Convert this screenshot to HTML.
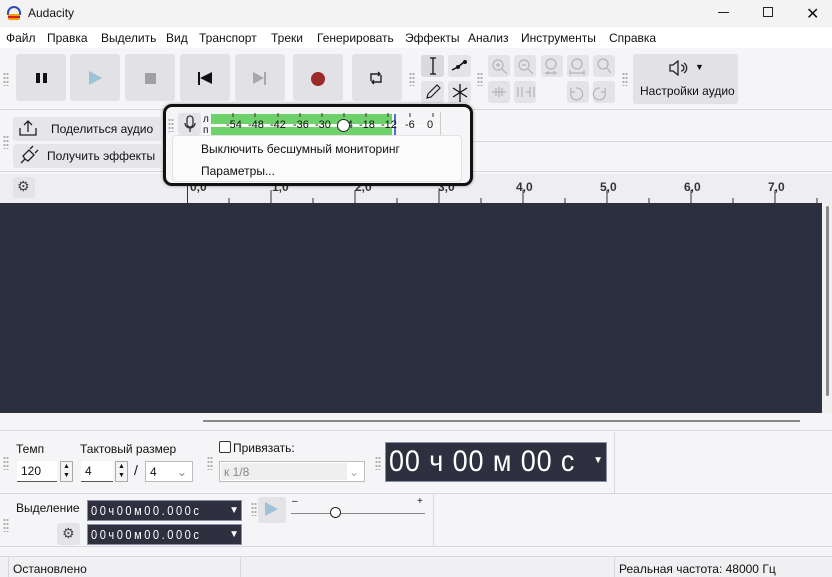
<!DOCTYPE html><html><head><meta charset="utf-8"><style>
*{box-sizing:border-box;margin:0;padding:0}
body{width:832px;height:577px;overflow:hidden;background:#f5f5f7;font-family:"Liberation Sans","DejaVu Sans",sans-serif;font-size:12px;color:#111;position:relative}
.a{position:absolute}
.btn{position:absolute;background:#e1e1e6;border-radius:3px}
.sb{position:absolute;background:#e4e4e8;border-radius:3px}
.grip{position:absolute;width:6px;height:14px;background-image:radial-gradient(circle,#aaa 1px,transparent 1.2px);background-size:3px 4px}
.tc{position:absolute;background:#2e3040;color:#fff;font-family:"Liberation Sans",sans-serif;border:1px solid #8a8fa8;white-space:pre;overflow:hidden}
.ln{position:absolute;background:#d8d8dc}
.m span{position:absolute;top:0}
.db span{position:absolute;top:0}
</style></head><body>
<div class="a" style="left:0;top:0;width:832px;height:27px;background:#f3f3f3"></div>
<svg class="a" style="left:6px;top:5px" width="16" height="16" viewBox="0 0 16 16"><path d="M2 10 V8 A6 6 0 0 1 14 8 V10" fill="none" stroke="#2a4db8" stroke-width="2"/><rect x="2" y="9" width="12" height="6" rx="2" fill="#f4a000"/><rect x="2" y="11" width="12" height="2" fill="#d62020"/></svg>
<div class="a" style="left:28px;top:6px;font-size:12px">Audacity</div>
<div class="a" style="left:718px;top:12px;width:11px;height:1px;background:#222"></div>
<div class="a" style="left:763px;top:7px;width:10px;height:10px;border:1px solid #222"></div>
<div class="a" style="left:806px;top:4px;font-size:16px">✕</div>
<div class="a" style="left:0;top:27px;width:832px;height:21px;background:#fff"></div>
<div class="a m" style="left:0;top:31px;width:832px;height:16px;font-size:12px">
<span style="left:6px">Файл</span><span style="left:47px">Правка</span><span style="left:101px">Выделить</span><span style="left:166px">Вид</span><span style="left:199px">Транспорт</span><span style="left:271px">Треки</span><span style="left:317px">Генерировать</span><span style="left:405px">Эффекты</span><span style="left:468px">Анализ</span><span style="left:521px">Инструменты</span><span style="left:609px">Справка</span>
</div>
<div class="grip" style="left:3px;top:72px"></div>
<div class="btn" style="left:16px;top:54px;width:50px;height:47px"></div>
<div class="a" style="left:36px;top:73px;width:4px;height:10px;background:#111"></div><div class="a" style="left:43px;top:73px;width:4px;height:10px;background:#111"></div>
<div class="btn" style="left:70px;top:54px;width:50px;height:47px"></div>
<div class="a" style="left:89px;top:71px;width:0;height:0;border-left:13px solid #9cc3d6;border-top:7px solid transparent;border-bottom:7px solid transparent"></div>
<div class="btn" style="left:125px;top:54px;width:50px;height:47px"></div>
<div class="a" style="left:145px;top:73px;width:11px;height:11px;background:#a0a0a4"></div>
<div class="btn" style="left:180px;top:54px;width:50px;height:47px"></div>
<div class="a" style="left:198px;top:72px;width:2px;height:13px;background:#111"></div><div class="a" style="left:200px;top:72px;border-right:12px solid #111;border-top:6.5px solid transparent;border-bottom:6.5px solid transparent"></div>
<div class="btn" style="left:235px;top:54px;width:50px;height:47px"></div>
<div class="a" style="left:253px;top:72px;border-left:11px solid #a8a8ac;border-top:6.5px solid transparent;border-bottom:6.5px solid transparent"></div><div class="a" style="left:264px;top:72px;width:2px;height:13px;background:#a8a8ac"></div>
<div class="btn" style="left:293px;top:54px;width:50px;height:47px"></div>
<div class="a" style="left:311px;top:72px;width:14px;height:14px;border-radius:50%;background:#9c2a2a"></div>
<div class="btn" style="left:352px;top:54px;width:50px;height:47px"></div>
<svg class="a" style="left:368px;top:70px" width="16" height="16" viewBox="0 0 16 16" fill="none" stroke="#222" stroke-width="1.4"><path d="M3 11V4h9M10 2l2 2-2 2M13 5v7H4M6 14l-2-2 2-2"/></svg>
<div class="grip" style="left:409px;top:72px"></div>
<div class="btn" style="left:421px;top:55px;width:23px;height:22px;background:#d9d9de"></div>
<svg class="a" style="left:425px;top:57px" width="16" height="18" fill="none" stroke="#111" stroke-width="1.3"><path d="M5 1h6M8 1v16M5 17h6"/></svg>
<div class="sb" style="left:448px;top:55px;width:23px;height:22px"></div>
<svg class="a" style="left:450px;top:58px" width="20" height="16"><path d="M2 12l6-3 6-5" stroke="#111" stroke-width="1.5" fill="none"/><circle cx="8" cy="9" r="2" fill="#111"/><circle cx="15" cy="4" r="2" fill="#111"/></svg>
<div class="sb" style="left:421px;top:81px;width:23px;height:22px"></div>
<svg class="a" style="left:424px;top:83px" width="18" height="18"><path d="M3 15l1-4 9-9 3 3-9 9z" stroke="#222" fill="none" stroke-width="1.2"/></svg>
<div class="sb" style="left:448px;top:81px;width:23px;height:22px"></div>
<svg class="a" style="left:451px;top:83px" width="18" height="20" fill="none" stroke="#111" stroke-width="1.3"><path d="M9 1v18M2 5l14 9M16 5L2 14"/></svg>
<div class="grip" style="left:477px;top:72px"></div>
<div class="sb" style="left:488px;top:55px;width:22px;height:22px"></div>
<div class="sb" style="left:514px;top:55px;width:22px;height:22px"></div>
<div class="sb" style="left:541px;top:55px;width:22px;height:22px"></div>
<div class="sb" style="left:567px;top:55px;width:22px;height:22px"></div>
<div class="sb" style="left:593px;top:55px;width:22px;height:22px"></div>
<div class="sb" style="left:488px;top:81px;width:22px;height:22px"></div>
<div class="sb" style="left:514px;top:81px;width:22px;height:22px"></div>
<div class="sb" style="left:567px;top:81px;width:22px;height:22px"></div>
<div class="sb" style="left:593px;top:81px;width:22px;height:22px"></div>
<svg class="a" style="left:488px;top:55px" width="130" height="50" fill="none" stroke="#b4b4b8" stroke-width="1.2">
<circle cx="10" cy="10" r="5"/><path d="M14 14l5 5M8 10h4M10 8v4"/>
<circle cx="36" cy="10" r="5"/><path d="M40 14l5 5M34 10h4"/>
<circle cx="63" cy="9" r="5"/><path d="M57 18h12M60 16v4M66 16v4"/>
<circle cx="89" cy="9" r="5"/><path d="M82 18h14M82 15v5M96 15v5"/>
<circle cx="115" cy="9" r="5"/><path d="M119 13l4 5"/>
<path d="M4 37h14M8 33v8M11 32v10M14 33v8"/>
<path d="M30 32v10M34 32v10M38 37h4M42 32v10M46 32v10"/>
<path d="M88 33a6 6 0 1 1-5 4M83 33v4h4"/>
<path d="M112 33a6 6 0 1 0 5 4M117 33v4h-4"/>
</svg>
<div class="grip" style="left:622px;top:72px"></div>
<div class="btn" style="left:633px;top:54px;width:105px;height:50px"></div>
<svg class="a" style="left:668px;top:60px" width="22" height="16" fill="none" stroke="#222" stroke-width="1.3"><path d="M2 5h3l5-4v14l-5-4H2z"/><path d="M13 5a3 3 0 0 1 0 6M16 3a6 6 0 0 1 0 10"/></svg>
<div class="a" style="left:695px;top:62px;font-size:9px">▼</div>
<div class="a" style="left:640px;top:84px;font-size:12px">Настройки аудио</div>
<div class="ln" style="left:0;top:109px;width:832px;height:1px"></div>
<div class="grip" style="left:3px;top:135px"></div>
<div class="btn" style="left:13px;top:117px;width:148px;height:24px;background:#e6e6ea"></div>
<svg class="a" style="left:18px;top:119px" width="20" height="18" fill="none" stroke="#222" stroke-width="1.3"><path d="M2 9v7h16V9M10 13V2M6 6l4-4 4 4"/></svg>
<div class="a" style="left:51px;top:122px">Поделиться аудио</div>
<div class="btn" style="left:13px;top:144px;width:148px;height:24px;background:#e6e6ea"></div>
<svg class="a" style="left:18px;top:145px" width="22" height="20" fill="none" stroke="#222" stroke-width="1.3"><path d="M3 18l4-4M7 14l-2-3 6-6 5 5-6 6zM12 4l3-3M17 8l3-3"/></svg>
<div class="a" style="left:47px;top:149px">Получить эффекты</div>
<div class="ln" style="left:0;top:171px;width:832px;height:1px"></div>
<div class="ln" style="left:472px;top:141px;width:360px;height:1px"></div>
<div class="a" style="left:0;top:174px;width:832px;height:29px;background:#eeeef2"></div>
<div class="sb" style="left:13px;top:177px;width:22px;height:21px"></div>
<div class="a" style="left:17px;top:178px;font-size:14px;color:#444">⚙</div>
<div class="a" style="left:187px;top:174px;width:1px;height:29px;background:#333"></div>
<div class="a" style="left:186px;top:178px;width:636px;height:24px;font-weight:bold;font-size:12px;color:#333">
<span class="a" style="left:4px;top:2px">0,0</span><span class="a" style="left:86px;top:2px">1,0</span><span class="a" style="left:169px;top:2px">2,0</span><span class="a" style="left:252px;top:2px">3,0</span><span class="a" style="left:330px;top:2px">4,0</span><span class="a" style="left:414px;top:2px">5,0</span><span class="a" style="left:498px;top:2px">6,0</span><span class="a" style="left:582px;top:2px">7,0</span>
</div>
<svg class="a" style="left:187px;top:190px" width="640" height="13"><g stroke="#333"><path d="M42 8v5M84 0v13M126 8v5M168 0v13M210 8v5M252 0v13M294 8v5M336 0v13M378 8v5M420 0v13M462 8v5M504 0v13M546 8v5M588 0v13M630 8v5"/></g></svg>
<div class="a" style="left:0;top:203px;width:822px;height:210px;background:#2c2f3d"></div>
<div class="a" style="left:822px;top:203px;width:10px;height:210px;background:#f0f0f0"></div>
<div class="a" style="left:826px;top:206px;width:3px;height:190px;background:#888;border-radius:2px"></div>
<div class="a" style="left:203px;top:420px;width:597px;height:2px;background:#888"></div>
<div class="ln" style="left:0;top:430px;width:832px;height:1px"></div>
<div class="grip" style="left:3px;top:456px"></div>
<div class="a" style="left:16px;top:442px">Темп</div>
<div class="a" style="left:17px;top:461px;width:40px;height:21px;background:#fff;border-bottom:1px solid #555;padding:3px 4px">120</div>
<div class="a" style="left:60px;top:461px;width:13px;height:21px;border:1px solid #aaa;background:#f4f4f4;font-size:7px;line-height:9px;text-align:center">▲<br>▼</div>
<div class="a" style="left:80px;top:442px">Тактовый размер</div>
<div class="a" style="left:81px;top:461px;width:32px;height:21px;background:#fff;border-bottom:1px solid #555;padding:3px 4px">4</div>
<div class="a" style="left:115px;top:461px;width:13px;height:21px;border:1px solid #aaa;background:#f4f4f4;font-size:7px;line-height:9px;text-align:center">▲<br>▼</div>
<div class="a" style="left:134px;top:462px;font-size:14px">/</div>
<div class="a" style="left:145px;top:461px;width:48px;height:21px;background:#fff;border:1px solid #bbb;padding:3px 4px">4<span style="position:absolute;right:5px;color:#888">⌄</span></div>
<div class="grip" style="left:207px;top:456px"></div>
<div class="a" style="left:219px;top:441px;width:12px;height:12px;border:1px solid #333;border-radius:2px;background:#fff"></div>
<div class="a" style="left:233px;top:441px">Привязать:</div>
<div class="a" style="left:219px;top:461px;width:146px;height:21px;background:#fff;border:1px solid #bbb;padding:3px 4px;color:#888"><span style="position:absolute;left:1px;top:1px;width:126px;height:17px;background:#efefef"></span><span style="position:relative">к 1/8</span><span style="position:absolute;right:5px;color:#aaa">⌄</span></div>
<div class="grip" style="left:375px;top:456px"></div>
<div class="tc" style="left:385px;top:442px;width:222px;height:40px"><div style="position:absolute;left:3px;top:0;font-size:30px;line-height:38px;transform:scaleX(0.9);transform-origin:left;letter-spacing:1px">00 ч 00 м 00 с</div><div style="position:absolute;right:3px;top:12px;font-size:10px">▼</div></div>
<div class="ln" style="left:614px;top:432px;width:1px;height:61px"></div>
<div class="ln" style="left:0;top:493px;width:832px;height:1px"></div>
<div class="grip" style="left:3px;top:518px"></div>
<div class="a" style="left:16px;top:501px">Выделение</div>
<div class="tc" style="left:87px;top:500px;width:155px;height:21px"><div style="position:absolute;left:3px;top:2px;font-size:13px;letter-spacing:3px;transform:scaleX(0.85);transform-origin:left">00ч00м00.000с</div><div style="position:absolute;right:2px;top:4px;font-size:10px">▼</div></div>
<div class="sb" style="left:57px;top:523px;width:23px;height:22px"></div>
<div class="a" style="left:62px;top:525px;font-size:14px;color:#444">⚙</div>
<div class="tc" style="left:87px;top:524px;width:155px;height:21px"><div style="position:absolute;left:3px;top:2px;font-size:13px;letter-spacing:3px;transform:scaleX(0.85);transform-origin:left">00ч00м00.000с</div><div style="position:absolute;right:2px;top:4px;font-size:10px">▼</div></div>
<div class="grip" style="left:251px;top:502px"></div>
<div class="sb" style="left:258px;top:497px;width:28px;height:26px"></div>
<div class="a" style="left:265px;top:502px;border-left:13px solid #9cc3d6;border-top:7px solid transparent;border-bottom:7px solid transparent"></div>
<div class="a" style="left:292px;top:496px;font-size:10px">–</div><div class="a" style="left:417px;top:496px;font-size:10px">+</div>
<div class="a" style="left:291px;top:513px;width:134px;height:1px;background:#888"></div>
<div class="a" style="left:330px;top:507px;width:11px;height:11px;border-radius:50%;border:1.5px solid #222;background:#fff"></div>
<div class="ln" style="left:433px;top:494px;width:1px;height:52px"></div>
<div class="ln" style="left:0;top:546px;width:832px;height:1px"></div>
<div class="ln" style="left:0;top:556px;width:832px;height:1px"></div>
<div class="a" style="left:0;top:557px;width:832px;height:20px;background:#f0f0f2"></div>
<div class="ln" style="left:8px;top:557px;width:1px;height:20px"></div>
<div class="ln" style="left:240px;top:557px;width:1px;height:20px"></div>
<div class="ln" style="left:614px;top:557px;width:1px;height:20px"></div>
<div class="a" style="left:13px;top:562px">Остановлено</div>
<div class="a" style="left:619px;top:562px">Реальная частота: 48000 Гц</div>
<div class="a" style="left:163px;top:104px;width:310px;height:82px;border:3px solid #111;border-radius:9px;background:#f5f5f7;box-shadow:0 0 3px rgba(0,0,0,.4)"></div>
<div class="grip" style="left:168px;top:118px"></div>
<div class="sb" style="left:178px;top:113px;width:23px;height:22px"></div>
<svg class="a" style="left:183px;top:115px" width="14" height="19" fill="none" stroke="#333" stroke-width="1.3"><rect x="4" y="1" width="6" height="11" rx="3"/><path d="M2 8a5 5 0 0 0 10 0M7 13v4"/></svg>
<div class="a" style="left:203px;top:114px;font-size:10px;line-height:11px">л<br>п</div>
<div class="a" style="left:211px;top:114px;width:181px;height:10px;background:#6ed26a"></div>
<div class="a" style="left:211px;top:127px;width:181px;height:9px;background:#6ed26a"></div>
<div class="a" style="left:394px;top:114px;width:2px;height:21px;background:#4f6fd0"></div>
<div class="a" style="left:211px;top:125px;width:228px;height:1px;background:#fff"></div>
<svg class="a" style="left:211px;top:113px" width="230" height="4" stroke="#333"><path d="M22 0v4M44 0v4M67 0v4M89 0v4M111 0v4M133 0v4M155 0v4M177 0v4M199 0v4M222 0v4"/></svg>
<div class="a db" style="left:0;top:119px;width:460px;height:14px;font-size:11px">
<span style="left:226px">-54</span><span style="left:248px">-48</span><span style="left:270px">-42</span><span style="left:293px">-36</span><span style="left:315px">-30</span><span style="left:337px">-24</span><span style="left:359px">-18</span><span style="left:381px">-12</span><span style="left:405px">-6</span><span style="left:427px">0</span>
</div>
<div class="a" style="left:337px;top:119px;width:13px;height:13px;border-radius:50%;border:1.5px solid #222;background:#fff"></div>
<div class="a" style="left:440px;top:112px;width:1px;height:24px;background:#ccc"></div>
<div class="a" style="left:172px;top:135px;width:290px;height:47px;background:#fbfbfb;border:1px solid #e2e2e2;border-radius:4px"></div>
<div class="a" style="left:201px;top:142px;font-size:12px">Выключить бесшумный мониторинг</div>
<div class="a" style="left:201px;top:164px;font-size:12px">Параметры...</div>
</body></html>
